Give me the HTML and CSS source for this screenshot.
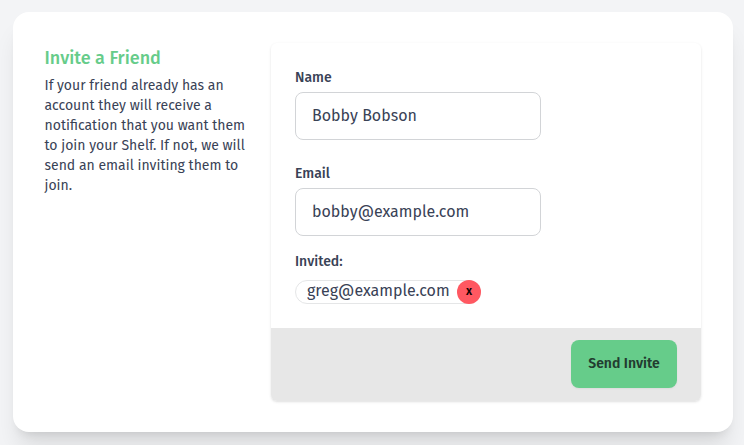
FILE: index.html
```html
<!DOCTYPE html>
<html lang="en">
<head>
<meta charset="utf-8">
<title>Invite a Friend</title>
<link rel="stylesheet" href="styles.css">
</head>
<body>
<main class="card">
  <section class="intro">
    <h3 class="title">Invite a Friend</h3>
    <p class="description">If your friend already has an<br>account they will receive a<br>notification that you want them<br>to join your Shelf. If not, we will<br>send an email inviting them to<br>join.</p>
  </section>
  <form class="panel">
    <div class="fields">
      <label class="label" for="name">Name</label>
      <input class="input" id="name" type="text" value="Bobby Bobson">
      <label class="label label-email" for="email">Email</label>
      <input class="input" id="email" type="text" value="bobby@example.com">
      <div class="label label-invited">Invited:</div>
      <div class="chip"><span class="chip-text">greg@example.com</span><button class="remove" type="button">x</button></div>
    </div>
    <div class="footer"><button class="send" type="button">Send Invite</button></div>
  </form>
</main>
</body>
</html>
```
FILE: styles.css
```css
* { box-sizing: border-box; }
body {
  margin: 0;
  height: 445px;
  overflow: hidden;
  padding: 12px 11px 13px 13px;
  background: #f3f4f6;
  color: #394256;
  font-family: "Fira Sans", "Noto Sans", sans-serif;
}
.card {
  display: flex;
  height: 420px;
  padding: 31px 32px 31px 31.5px;
  border-radius: 16px;
  background: #fff;
  box-shadow: 0 20px 25px -5px rgba(0,0,0,.1), 0 8px 10px -6px rgba(0,0,0,.1);
}
.intro { width: 226.5px; flex: none; padding-top: 3px; }
.title {
  margin: 0;
  font-size: 18px;
  line-height: 24px;
  font-weight: 500;
  color: #66cc8a;
}
.description {
  margin: 6px 0 0;
  font-size: 14px;
  line-height: 20px;
  white-space: nowrap;
}
.panel {
  display: flex;
  flex-direction: column;
  width: 430px;
  height: 358px;
  overflow: hidden;
  border-radius: 6px;
  box-shadow: 0 1px 3px rgba(0,0,0,.1), 0 1px 2px -1px rgba(0,0,0,.1);
}
.fields { height: 285px; padding: 25px 24px 0; }
.label {
  display: block;
  height: 20px;
  font-size: 14px;
  line-height: 20px;
  font-weight: 500;
}
.label-email { margin-top: 24px; }
.label-invited { margin-top: 16px; }
.input {
  display: block;
  width: 246px;
  height: 48px;
  margin-top: 4px;
  padding: 0 16px 1px;
  border: 1px solid #d2d4d7;
  border-radius: 8px;
  background: #fff;
  color: #394256;
  font: 400 16px "Fira Sans", "Noto Sans", sans-serif;
}
.chip {
  display: flex;
  width: 186px;
  height: 24px;
  margin-top: 8px;
  padding-left: 11px;
  border: 1px solid #e5e6e7;
  border-radius: 12px;
  justify-content: space-between;
}
.chip-text { font-size: 16px; line-height: 20px; }
.remove {
  width: 24px;
  height: 24px;
  margin: -1px;
  padding: 0 0 2px;
  border: 0;
  border-radius: 50%;
  background: #ff5861;
  color: #160203;
  font: 600 12px "Fira Sans", "Noto Sans", sans-serif;
}
.footer {
  display: flex;
  flex: 1;
  padding: 12px 24px 13px;
  justify-content: flex-end;
  background: #e7e7e7;
}
.send {
  width: 106px;
  height: 48px;
  padding: 0 0 1px;
  border: 0;
  border-radius: 8px;
  background: #66cc8a;
  box-shadow: 0 1px 2px rgba(0,0,0,.05);
  color: #223d30;
  font: 600 14px "Fira Sans", "Noto Sans", sans-serif;
}
```
